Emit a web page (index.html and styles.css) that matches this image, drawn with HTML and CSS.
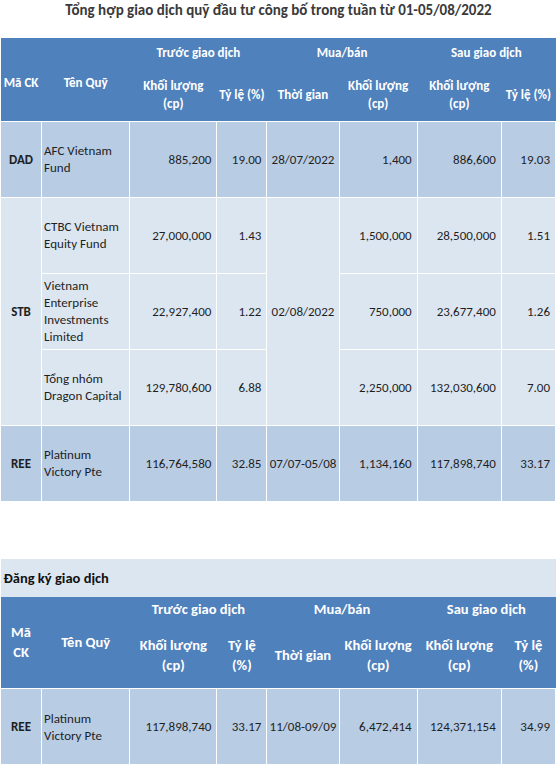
FILE: index.html
```html
<!DOCTYPE html>
<html lang="vi">
<head>
<meta charset="utf-8">
<title>Tổng hợp giao dịch quỹ</title>
<link rel="stylesheet" href="styles.css">
</head>
<body>
<h1 class="title">Tổng hợp giao dịch quỹ đầu tư công bố trong tuần từ 01-05/08/2022</h1>

<table class="grid grid-main">
  <colgroup>
    <col class="c1"><col class="c2"><col class="c3"><col class="c4"><col class="c5"><col class="c6"><col class="c7"><col class="c8">
  </colgroup>
  <thead>
    <tr class="hrow1">
      <th rowspan="2" class="h-span">Mã CK</th>
      <th rowspan="2" class="h-span">Tên Quỹ</th>
      <th colspan="2" class="grp">Trước giao dịch</th>
      <th colspan="2" class="grp">Mua/bán</th>
      <th colspan="2" class="grp">Sau giao dịch</th>
    </tr>
    <tr class="hrow2">
      <th>Khối lượng<br>(cp)</th>
      <th>Tỷ lệ (%)</th>
      <th>Thời gian</th>
      <th>Khối lượng<br>(cp)</th>
      <th>Khối lượng<br>(cp)</th>
      <th>Tỷ lệ (%)</th>
    </tr>
  </thead>
  <tbody>
    <tr class="dark">
      <td class="code">DAD</td>
      <td class="name">AFC Vietnam<br>Fund</td>
      <td class="num">885,200</td>
      <td class="num">19.00</td>
      <td class="date">28/07/2022</td>
      <td class="num">1,400</td>
      <td class="num">886,600</td>
      <td class="num">19.03</td>
    </tr>
    <tr class="light">
      <td class="code" rowspan="3">STB</td>
      <td class="name">CTBC Vietnam<br>Equity Fund</td>
      <td class="num">27,000,000</td>
      <td class="num">1.43</td>
      <td class="date" rowspan="3">02/08/2022</td>
      <td class="num">1,500,000</td>
      <td class="num">28,500,000</td>
      <td class="num">1.51</td>
    </tr>
    <tr class="light">
      <td class="name">Vietnam<br>Enterprise<br>Investments<br>Limited</td>
      <td class="num">22,927,400</td>
      <td class="num">1.22</td>
      <td class="num">750,000</td>
      <td class="num">23,677,400</td>
      <td class="num">1.26</td>
    </tr>
    <tr class="light">
      <td class="name">Tổng nhóm<br>Dragon Capital</td>
      <td class="num">129,780,600</td>
      <td class="num">6.88</td>
      <td class="num">2,250,000</td>
      <td class="num">132,030,600</td>
      <td class="num">7.00</td>
    </tr>
    <tr class="dark">
      <td class="code">REE</td>
      <td class="name">Platinum<br>Victory Pte</td>
      <td class="num">116,764,580</td>
      <td class="num">32.85</td>
      <td class="date">07/07-05/08</td>
      <td class="num">1,134,160</td>
      <td class="num">117,898,740</td>
      <td class="num">33.17</td>
    </tr>
  </tbody>
</table>

<table class="grid grid-reg">
  <colgroup>
    <col class="c1"><col class="c2"><col class="c3"><col class="c4"><col class="c5"><col class="c6"><col class="c7"><col class="c8">
  </colgroup>
  <thead>
    <tr class="band">
      <th colspan="8" class="band-cell">Đăng ký giao dịch</th>
    </tr>
    <tr class="hrow1">
      <th rowspan="2" class="h-span">Mã<br>CK</th>
      <th rowspan="2" class="h-span">Tên Quỹ</th>
      <th colspan="2" class="grp">Trước giao dịch</th>
      <th colspan="2" class="grp">Mua/bán</th>
      <th colspan="2" class="grp">Sau giao dịch</th>
    </tr>
    <tr class="hrow2">
      <th>Khối lượng<br>(cp)</th>
      <th>Tỷ lệ<br>(%)</th>
      <th>Thời gian</th>
      <th>Khối lượng<br>(cp)</th>
      <th>Khối lượng<br>(cp)</th>
      <th>Tỷ lệ<br>(%)</th>
    </tr>
  </thead>
  <tbody>
    <tr class="dark">
      <td class="code">REE</td>
      <td class="name">Platinum<br>Victory Pte</td>
      <td class="num">117,898,740</td>
      <td class="num">33.17</td>
      <td class="date">11/08-09/09</td>
      <td class="num">6,472,414</td>
      <td class="num">124,371,154</td>
      <td class="num">34.99</td>
    </tr>
  </tbody>
</table>
</body>
</html>
```

FILE: styles.css
```css
html, body {
  margin: 0;
  padding: 0;
  background: #ffffff;
}

body {
  font-family: Carlito, Calibri, Lato, "Open Sans", sans-serif;
  color: #1f1f1f;
  font-size: 13px;
}

.title {
  margin: 0;
  height: 38px;
  padding-top: 0;
  box-sizing: border-box;
  font-size: 15px;
  line-height: 20px;
  font-weight: 700;
  color: #3a3a3a;
  text-align: center;
}

.grid {
  border-collapse: collapse;
  table-layout: fixed;
  width: 556px;
}

.grid td {
  border: 1px solid #ffffff;
  padding: 0 5px;
  line-height: 17px;
  vertical-align: middle;
}

.grid th {
  border: none;
  padding: 0;
  font-weight: 600;
  color: #ffffff;
  background: #4f81bd;
  text-align: center;
  vertical-align: middle;
  line-height: 18px;
}

.c1 { width: 41px; }
.c2 { width: 88px; }
.c3 { width: 87px; }
.c4 { width: 50px; }
.c5 { width: 72px; }
.c6 { width: 78px; }
.c7 { width: 84px; }
.c8 { width: 54px; }

.grid-main .hrow1 { height: 27px; }
.grid-main .hrow2 { height: 56px; }
.grid-main tbody tr { height: 76px; }

.grid-main .hrow1 th.grp { padding-top: 3px; }
.grid-main .hrow2 th { padding-top: 4px; }
.grid-main th.h-span { padding-top: 8px; }

.dark td { background: #b8cce4; }
.light td { background: #dce6f1; }

.code {
  text-align: center;
  font-weight: 700;
}

.grid td.name {
  text-align: left;
  padding-left: 2px;
  padding-right: 2px;
}

.num {
  text-align: right;
}

.grid td.num { padding-right: 5px; }

.date {
  text-align: center;
  white-space: nowrap;
}

.grid td.date { padding: 0; }

.grid-reg {
  margin-top: 57px;
}

.grid-reg th {
  font-size: 14.5px;
  line-height: 20px;
}

.grid-reg .band-cell {
  background: #dce6f1;
  color: #111111;
  font-weight: 700;
  text-align: left;
  padding-left: 3px;
  height: 38px;
  font-size: 14.5px;
}

.grid-reg .hrow1 { height: 25px; }
.grid-reg .hrow2 { height: 67px; }
.grid-reg tbody tr { height: 76px; }
```
